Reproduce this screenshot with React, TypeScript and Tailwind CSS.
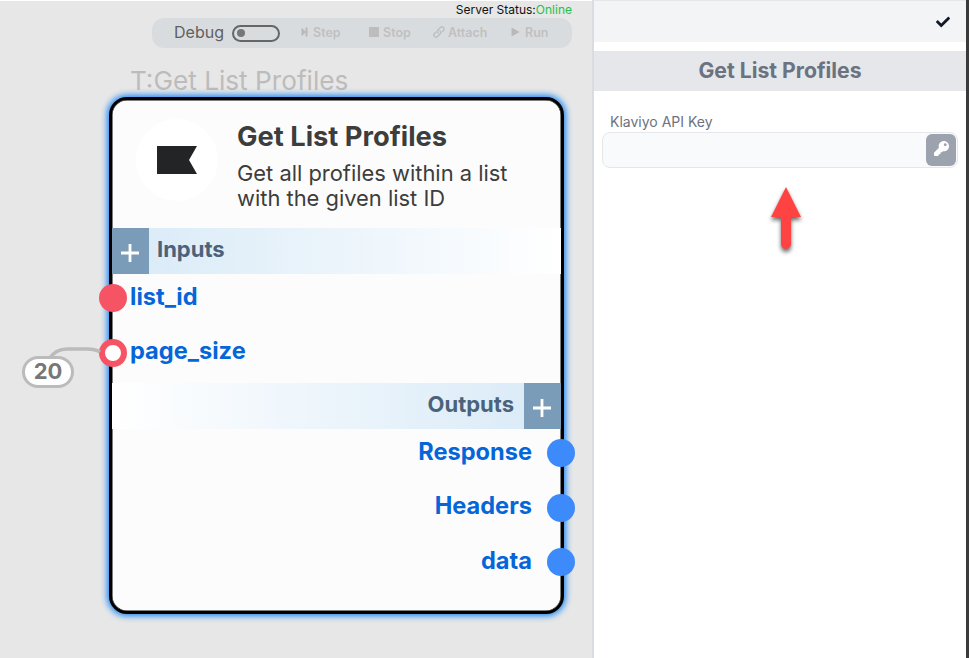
import type { ReactNode } from "react";
import { FaCheck, FaKey } from "react-icons/fa";

const inputs = [
  { name: "list_id", open: false },
  { name: "page_size", open: true },
];

const outputs = ["Response", "Headers", "data"];

function ToolButton({ className, icon, label }: { className: string; icon: ReactNode; label: string }) {
  return (
    <button className={`flex items-center text-[12.500px] leading-4 font-semibold text-[#c0c0c0] ${className}`}>
      {icon}
      <span>{label}</span>
    </button>
  );
}

function Toolbar() {
  return (
    <div className="flex h-[30px] w-[420px] items-center rounded-xl bg-[#d9dcdf] pl-[22px]">
      <span className="w-[58px] pb-[2px] text-[16px] leading-5 text-[#606060]">Debug</span>
      <span className="flex h-[17px] w-12 items-center rounded-full border-2 border-[#666] pl-[3px]">
        <span className="size-2 rounded-full bg-[#777]" />
      </span>
      <ToolButton
        className="ml-[21px] w-[68px] gap-[5px]"
        label="Step"
        icon={
          <svg className="mb-[2px]" width="7" height="10" viewBox="0 0 7 10" fill="#b8b8b8">
            <path d="M0.500 0.500 4.700 5 0.500 9.500zM4.500 0.500H6.500V9.500H4.500z" />
          </svg>
        }
      />
      <ToolButton className="w-16 gap-[4px]" label="Stop" icon={<span className="mb-[3px] size-[10px] bg-[#bdbdbd]" />} />
      <ToolButton
        className="w-[78px] gap-[3px]"
        label="Attach"
        icon={
          <svg className="mb-[2px]" width="12" height="12" viewBox="0 0 12 12" fill="none" stroke="#bdbdbd" strokeWidth="1.4" strokeLinecap="round">
            <path d="M5.1 7.1C4 6 4.2 4.800 5 4L7.400 1.600C8.300.7 9.700.7 10.500 1.500S11.300 3.700 10.400 4.600L9.300 5.700" />
            <path d="M6.900 4.900C8 6 7.800 7.200 7 8L4.600 10.400C3.700 11.300 2.300 11.300 1.500 10.500S.7 8.300 1.600 7.400L2.700 6.300" />
          </svg>
        }
      />
      <ToolButton
        className="gap-[5px]"
        label="Run"
        icon={
          <svg className="mb-[2px]" width="9" height="10" viewBox="0 0 9 10" fill="#b8b8b8">
            <path d="M0.500 0.500 8.500 5 0.500 9.500z" />
          </svg>
        }
      />
    </div>
  );
}

function AddButton() {
  return (
    <button className="flex h-full w-[37px] shrink-0 items-center justify-center bg-[#7a9cb8] pt-[3px] pr-[2px]">
      <svg width="18" height="18" viewBox="0 0 18 18" stroke="#fff" strokeWidth="2.800">
        <path d="M9 0V18M0 9H18" />
      </svg>
    </button>
  );
}

function NodeCard() {
  return (
    <section className="absolute top-[96px] left-[109px] flex h-[517px] w-[455px] flex-col rounded-[18px] border-[3px] border-black bg-[#fcfcfc] shadow-[0_0_6px_2px_#1e88f5,inset_0_0_0_0.5px_#000]">
      <header className="flex h-32 shrink-0 pl-6">
        <div className="mt-[19px] flex size-[82px] items-center justify-center rounded-full bg-white">
          <svg width="40" height="28" viewBox="0 0 40 28" fill="#232426">
            <path d="M0 0H40L32 14 40 28H0z" />
          </svg>
        </div>
        <div className="ml-[19px] whitespace-nowrap pt-[20px] text-[#3d3d3d]">
          <h1 className="text-[27.300px] leading-[34px] font-bold">Get List Profiles</h1>
          <p className="mt-[7px] text-[21.900px] leading-[25px]">
            Get all profiles within a list
            <br />
            with the given list ID
          </p>
        </div>
      </header>
      <div className="flex h-[46px] shrink-0 bg-linear-to-r from-[#d8eaf7] to-white">
        <AddButton />
        <h2 className="pt-[6px] pl-2 text-[22px] leading-[30px] font-bold text-[#4b627b]">Inputs</h2>
      </div>
      <ul className="-ml-[13px] h-[109px] shrink-0">
        {inputs.map((port) => (
          <li key={port.name} className="group flex h-[54.5px] pt-[10px]">
            {port.open ? (
              <span className="size-[28px] rounded-full border-[6px] border-[#f65365] bg-white" />
            ) : (
              <span className="size-[28px] rounded-full bg-[#f65365]" />
            )}
            <span className="ml-[3px] text-[23.600px] leading-[25px] font-bold text-[#0566d9] group-even:-mt-px">
              {port.name}
            </span>
          </li>
        ))}
      </ul>
      <div className="flex h-[46px] shrink-0 justify-end bg-linear-to-l from-[#d8eaf7] to-white">
        <h2 className="pt-[6px] pr-[10px] text-[22px] leading-[30px] font-bold text-[#4b627b]">Outputs</h2>
        <AddButton />
      </div>
      <ul className="-mr-[14px]">
        {outputs.map((name) => (
          <li key={name} className="group flex h-[54.5px] justify-end pt-[10px]">
            <span className="mr-[15px] text-[23.600px] leading-[25px] font-bold text-[#0566d9] group-even:-mt-px">
              {name}
            </span>
            <span className="size-[28px] rounded-full bg-[#3d8bfa]" />
          </li>
        ))}
      </ul>
    </section>
  );
}

export default function App() {
  return (
    <div className="flex h-[658px] w-[969px] overflow-hidden bg-white font-['Inter',sans-serif]">
      <main className="relative flex w-[592px] shrink-0 flex-col items-end border-t border-white bg-[#e7e7e7] pr-5">
        <p className="h-[17px] text-[12px] leading-[17px] whitespace-nowrap text-[#111]">
          Server Status:<span className="text-[#1fc04b]">Online</span>
        </p>
        <Toolbar />
        <div className="mt-[17px] w-[442px] text-[26.200px] leading-8 text-[#bcbcbc]">T:Get List Profiles</div>
        <NodeCard />
        <svg className="absolute top-[343px] left-[45px]" width="60" height="18" viewBox="0 0 60 18" fill="none" stroke="#bbb" strokeWidth="3.500">
          <path d="M4 15C8 9 14 5 22 5H42C48 5 51 5.500 55 8" />
        </svg>
        <div className="absolute top-[355px] left-[22px] flex h-8 w-[52px] items-center justify-center rounded-full border-[3.500px] border-[#bbb] bg-white pb-[2px] text-[22px] font-bold text-[#777]">
          20
        </div>
      </main>
      <aside className="flex w-[374px] shrink-0 flex-col border-t border-l-2 border-t-[#e5e7eb] border-l-[#d9dce1]">
        <div className="flex h-[41px] items-center justify-end bg-[#f3f4f6] pr-4">
          <FaCheck size={14} color="#111827" />
        </div>
        <h2 className="mt-[9px] h-10 bg-[#e5e7eb] pt-[4px] text-center text-[21.200px] leading-[30px] font-bold text-[#6b7280]">
          Get List Profiles
        </h2>
        <label className="mt-[21px] ml-4 text-[14px] leading-5 text-[#6b7280]">Klaviyo API Key</label>
        <div className="ml-2 flex h-9 w-[356px] items-center justify-end rounded-lg border border-[#e5e7eb] bg-[#f9fafb] pr-[1px]">
          <button className="flex h-8 w-[30px] items-start justify-center rounded-md bg-[#9ca3af] pt-[7px]">
            <FaKey size={15} color="#fff" />
          </button>
        </div>
        <svg className="mt-[14px] ml-[169px]" width="46" height="76" viewBox="0 0 46 76">
          <path
            className="drop-shadow-[0_3px_2px_rgba(0,0,0,0.600)]"
            d="M23 5 38 35H28V62A5 5 0 0 1 18 62V35H8Z"
            fill="#ff4343"
          />
        </svg>
      </aside>
      <div className="w-[3px] shrink-0 bg-[#3a3a3a]" />
    </div>
  );
}
